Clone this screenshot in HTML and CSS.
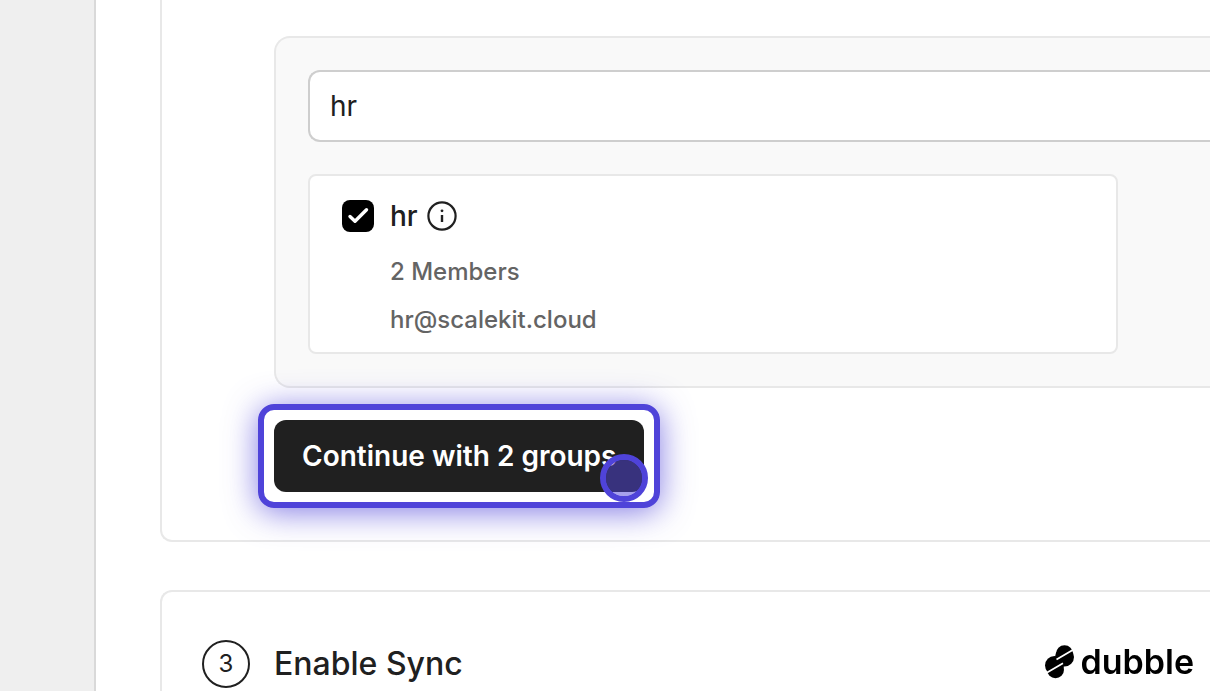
FILE: index.html
```html
<!DOCTYPE html>
<html lang="en">
<head>
<meta charset="utf-8">
<title>Directory sync</title>
<link rel="stylesheet" href="styles.css">
</head>
<body>
<div class="app">
  <aside class="sidebar"></aside>
  <main class="content">
    <section class="step step-groups">
      <div class="panel">
        <input class="search" type="text" value="hr" aria-label="Search groups">
        <div class="group">
          <div class="group-head">
            <input class="check" type="checkbox" id="group-hr" checked>
            <label class="group-name" for="group-hr">hr</label>
            <svg class="info" viewBox="0 0 32 32" aria-hidden="true">
              <circle cx="16" cy="16" r="13.6" fill="none" stroke="currentColor" stroke-width="2.2"/>
              <path d="M16 15v7" stroke="currentColor" stroke-width="2.4"/>
              <circle cx="16" cy="10.8" r="1.4" fill="currentColor"/>
            </svg>
          </div>
          <p class="meta">2 Members</p>
          <p class="meta">hr@scalekit.cloud</p>
        </div>
      </div>
      <div class="action">
        <button class="continue" type="button">Continue with 2 groups</button>
        <span class="spotlight"></span>
        <span class="pointer"></span>
      </div>
    </section>
    <section class="step step-sync">
      <span class="number">3</span>
      <h2 class="title">Enable Sync</h2>
    </section>
  </main>
</div>
<div class="brand">
  <svg class="brand-mark" viewBox="0 0 30 34" aria-hidden="true">
    <circle cx="19.500" cy="8.700" r="8.500"/>
    <circle cx="19.500" cy="12" r="9.500"/>
    <circle cx="9.500" cy="20.500" r="9.500"/>
    <circle cx="10.500" cy="24.700" r="8.500"/>
    <path d="M11.500 14.600L29 4.200M-.5 29L18 18.300" stroke="#fff" stroke-width="1.800"/>
  </svg>
  <span class="brand-name">dubble</span>
</div>
</body>
</html>
```
FILE: styles.css
```css
* { box-sizing: border-box; }
body {
  margin: 0;
  background: #fff;
  color: #202020;
  font-family: Inter, "Liberation Sans", sans-serif;
}
.app { display: flex; min-height: 100vh; }
.sidebar {
  flex: none;
  width: 96px;
  background: #efefef;
  border-right: 2px solid #d9d9d9;
}
.content {
  flex: 1;
  display: flex;
  flex-direction: column;
  gap: 48px;
  padding-left: 64px;
}
.step { border: 2px solid #e8e8e8; border-right: 0; }
.step-groups {
  border-top: 0;
  border-radius: 0 0 0 12px;
  padding: 36px 0 48px 112px;
}
.panel {
  padding: 32px 0 32px 32px;
  background: #f9f9f9;
  border: 2px solid #e8e8e8;
  border-right: 0;
  border-radius: 16px 0 0 16px;
}
.search {
  display: block;
  width: 100%;
  height: 72px;
  padding: 0 20px;
  border: 2px solid #cecece;
  border-right: 0;
  border-radius: 12px 0 0 12px;
  background: #fff;
  color: #202020;
  font: 400 28px/40px Inter, "Liberation Sans", sans-serif;
  outline: none;
}
.group {
  max-width: 810px;
  margin-top: 32px;
  padding: 20px 32px 8px;
  background: #fff;
  border: 2px solid #e8e8e8;
  border-radius: 8px;
}
.group-head { display: flex; align-items: center; height: 40px; margin-bottom: 12px; }
.check {
  appearance: none;
  width: 32px;
  height: 32px;
  margin: 0 16px 0 0;
  border-radius: 8px;
  background: #000 url("data:image/svg+xml,%3Csvg xmlns='http://www.w3.org/2000/svg' viewBox='0 0 32 32'%3E%3Cpath d='M8 16.500l5 4.800L24.500 9.800' fill='none' stroke='white' stroke-width='3.400' stroke-linecap='round' stroke-linejoin='round'/%3E%3C/svg%3E");
}
.group-name { font-size: 28px; font-weight: 500; line-height: 40px; }
.info { width: 32px; height: 32px; margin-left: 8px; }
.meta {
  margin: 0;
  padding-left: 48px;
  color: #646464;
  font-size: 24px;
  font-weight: 500;
  line-height: 48px;
}
.action { position: relative; width: fit-content; margin-top: 32px; }
.continue {
  display: block;
  height: 72px;
  padding: 0 28px;
  border: 0;
  border-radius: 12px;
  background: #202020;
  color: #fff;
  font: 600 28px/40px Inter, "Liberation Sans", sans-serif;
}
.spotlight {
  position: absolute;
  inset: -16px;
  border: 6px solid #4f43d9;
  border-radius: 16px;
  box-shadow: 0 4px 32px rgba(79, 67, 217, 0.7);
  pointer-events: none;
}
.pointer {
  position: absolute;
  right: -4px;
  bottom: -10px;
  width: 48px;
  height: 48px;
  border: 6px solid #4f43d9;
  border-radius: 50%;
  background: rgba(79, 67, 217, 0.5);
  background-clip: padding-box;
  pointer-events: none;
}
.step-sync {
  flex: 1;
  display: flex;
  align-items: flex-start;
  gap: 24px;
  padding: 48px 40px 0;
  border-radius: 12px 0 0 0;
  border-bottom: 0;
}
.number {
  width: 48px;
  height: 48px;
  border: 2px solid #202020;
  border-radius: 50%;
  font-size: 24px;
  line-height: 44px;
  text-align: center;
}
.title { margin: 0; font-size: 32px; font-weight: 500; line-height: 48px; }
.brand {
  position: fixed;
  right: 16px;
  bottom: 7px;
  display: flex;
  align-items: center;
  gap: 6px;
  color: #000;
}
.brand-mark { width: 30px; height: 34px; }
.brand-name { font-size: 34px; font-weight: 600; line-height: 44px; }
```
